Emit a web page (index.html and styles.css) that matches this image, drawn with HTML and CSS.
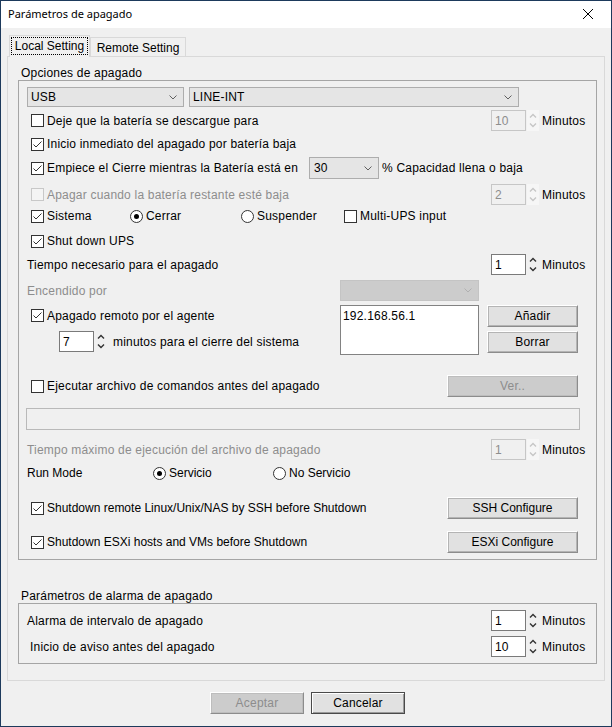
FILE: index.html
```html
<!DOCTYPE html>
<html lang="es">
<head>
<meta charset="utf-8">
<title>Parámetros de apagado</title>
<link rel="stylesheet" href="styles.css">
</head>
<body>
<div class="window">
  <div class="titlebar">
    <span class="title">Parámetros de apagado</span>
    <span class="close"><svg width="10" height="10" viewBox="0 0 10 10"><path d="M0 0L10 10M10 0L0 10" stroke="#000" stroke-width="1" fill="none"/></svg></span>
  </div>
  <div class="client">
    <div class="tabs">
      <div class="tab active"><span class="focus">Local Setting</span></div>
      <div class="tab">Remote Setting</div>
    </div>
    <div class="panel">
      <div class="glabel">Opciones de apagado</div>
      <div class="group">
        <div class="row h20">
          <div class="select usb"><span>USB</span><svg class="chev" width="8" height="5" viewBox="0 0 8 5"><path d="M0.5 0.5L4 4L7.5 0.5" stroke="#606060" fill="none"/></svg></div>
          <div class="select model"><span>LINE-INT</span><svg class="chev" width="8" height="5" viewBox="0 0 8 5"><path d="M0.5 0.5L4 4L7.5 0.5" stroke="#606060" fill="none"/></svg></div>
        </div>

        <div class="row h21 mt3">
          <label class="chk"><span class="cb"></span>Deje que la batería se descargue para</label>
          <div class="spin disabled">
            <span class="field">10</span>
            <span class="arrows"><svg width="12" height="21" viewBox="0 0 12 21"><path d="M3 7.5L6 4.5L9 7.5M3 13.5L6 16.5L9 13.5" stroke="#c6c6c6" stroke-width="1.4" fill="none"/></svg></span>
            <span class="unit">Minutos</span>
          </div>
        </div>

        <div class="row h20 mt3">
          <label class="chk"><span class="cb on"><svg width="11" height="11" viewBox="0 0 11 11"><path d="M1.5 5.5L4 8L9.5 2.5" stroke="#333" fill="none"/></svg></span>Inicio inmediato del apagado por batería baja</label>
        </div>

        <div class="row h22 mt3">
          <label class="chk w278"><span class="cb on"><svg width="11" height="11" viewBox="0 0 11 11"><path d="M1.5 5.5L4 8L9.5 2.5" stroke="#333" fill="none"/></svg></span>Empiece el Cierre mientras la Batería está en</label>
          <div class="select pct"><span>30</span><svg class="chev" width="8" height="5" viewBox="0 0 8 5"><path d="M0.5 0.5L4 4L7.5 0.5" stroke="#606060" fill="none"/></svg></div>
          <span class="after-pct">% Capacidad llena o baja</span>
        </div>

        <div class="row h21 mt5">
          <label class="chk dis"><span class="cb off"></span>Apagar cuando la batería restante esté baja</label>
          <div class="spin disabled">
            <span class="field">2</span>
            <span class="arrows"><svg width="12" height="21" viewBox="0 0 12 21"><path d="M3 7.5L6 4.5L9 7.5M3 13.5L6 16.5L9 13.5" stroke="#c6c6c6" stroke-width="1.4" fill="none"/></svg></span>
            <span class="unit">Minutos</span>
          </div>
        </div>

        <div class="row h20 mt1">
          <label class="chk w99"><span class="cb on"><svg width="11" height="11" viewBox="0 0 11 11"><path d="M1.5 5.5L4 8L9.5 2.5" stroke="#333" fill="none"/></svg></span>Sistema</label>
          <label class="opt w111"><span class="rb on"></span>Cerrar</label>
          <label class="opt w103"><span class="rb"></span>Suspender</label>
          <label class="opt"><span class="cb"></span>Multi-UPS input</label>
        </div>

        <div class="row h20 mt5">
          <label class="chk"><span class="cb on"><svg width="11" height="11" viewBox="0 0 11 11"><path d="M1.5 5.5L4 8L9.5 2.5" stroke="#333" fill="none"/></svg></span>Shut down UPS</label>
        </div>

        <div class="row h21 mt3">
          <span>Tiempo necesario para el apagado</span>
          <div class="spin">
            <span class="field">1</span>
            <span class="arrows"><svg width="12" height="21" viewBox="0 0 12 21"><path d="M3 7.5L6 4.5L9 7.5M3 13.5L6 16.5L9 13.5" stroke="#333" stroke-width="1.4" fill="none"/></svg></span>
            <span class="unit">Minutos</span>
          </div>
        </div>

        <div class="agent mt5">
          <span class="dis-text cell-label">Encendido por</span>
          <div class="select off"><span></span><svg class="chev" width="8" height="5" viewBox="0 0 8 5"><path d="M0.5 0.5L4 4L7.5 0.5" stroke="#b0b0b0" fill="none"/></svg></div>
          <span></span>

          <div class="agent-left">
            <div class="row h21">
              <label class="chk"><span class="cb on"><svg width="11" height="11" viewBox="0 0 11 11"><path d="M1.5 5.5L4 8L9.5 2.5" stroke="#333" fill="none"/></svg></span>Apagado remoto por el agente</label>
            </div>
            <div class="row h21 mt5">
              <div class="spin inline">
                <span class="field">7</span>
                <span class="arrows"><svg width="12" height="21" viewBox="0 0 12 21"><path d="M3 7.5L6 4.5L9 7.5M3 13.5L6 16.5L9 13.5" stroke="#333" stroke-width="1.4" fill="none"/></svg></span>
                <span class="unit">minutos para el cierre del sistema</span>
              </div>
            </div>
          </div>
          <div class="list">192.168.56.1</div>
          <div class="btncol">
            <div class="btn">Añadir</div>
            <div class="btn">Borrar</div>
          </div>
        </div>

        <div class="row h22 mt20">
          <label class="chk"><span class="cb"></span>Ejecutar archivo de comandos antes del apagado</label>
          <div class="btn wide disabled push">Ver..</div>
        </div>

        <div class="tfield mt11"></div>

        <div class="row h21 mt9">
          <span class="dis-text">Tiempo máximo de ejecución del archivo de apagado</span>
          <div class="spin disabled">
            <span class="field">1</span>
            <span class="arrows"><svg width="12" height="21" viewBox="0 0 12 21"><path d="M3 7.5L6 4.5L9 7.5M3 13.5L6 16.5L9 13.5" stroke="#c6c6c6" stroke-width="1.4" fill="none"/></svg></span>
            <span class="unit">Minutos</span>
          </div>
        </div>

        <div class="row h20 mt3 tight">
          <span class="w126">Run Mode</span>
          <label class="opt w120"><span class="rb on"></span>Servicio</label>
          <label class="opt"><span class="rb"></span>No Servicio</label>
        </div>

        <div class="row h22 mt14 tight">
          <label class="chk"><span class="cb on"><svg width="11" height="11" viewBox="0 0 11 11"><path d="M1.5 5.5L4 8L9.5 2.5" stroke="#333" fill="none"/></svg></span>Shutdown remote Linux/Unix/NAS by SSH before Shutdown</label>
          <div class="btn wide push">SSH Configure</div>
        </div>

        <div class="row h22 mt12 tight">
          <label class="chk"><span class="cb on"><svg width="11" height="11" viewBox="0 0 11 11"><path d="M1.5 5.5L4 8L9.5 2.5" stroke="#333" fill="none"/></svg></span>Shutdown ESXi hosts and VMs before Shutdown</label>
          <div class="btn wide push">ESXi Configure</div>
        </div>
      </div>

      <div class="glabel g2label">Parámetros de alarma de apagado</div>
      <div class="group">
        <div class="row h21">
          <span>Alarma de intervalo de apagado</span>
          <div class="spin">
            <span class="field">1</span>
            <span class="arrows"><svg width="12" height="21" viewBox="0 0 12 21"><path d="M3 7.5L6 4.5L9 7.5M3 13.5L6 16.5L9 13.5" stroke="#333" stroke-width="1.4" fill="none"/></svg></span>
            <span class="unit">Minutos</span>
          </div>
        </div>
        <div class="row h21 mt5">
          <span class="indent">Inicio de aviso antes del apagado</span>
          <div class="spin">
            <span class="field">10</span>
            <span class="arrows"><svg width="12" height="21" viewBox="0 0 12 21"><path d="M3 7.5L6 4.5L9 7.5M3 13.5L6 16.5L9 13.5" stroke="#333" stroke-width="1.4" fill="none"/></svg></span>
            <span class="unit">Minutos</span>
          </div>
        </div>
      </div>
    </div>

    <div class="actions">
      <div class="btn dlg disabled">Aceptar</div>
      <div class="btn dlg default">Cancelar</div>
    </div>
  </div>
</div>
</body>
</html>
```

FILE: styles.css
```css
* { box-sizing: border-box; }

body {
  margin: 0;
  background: #f0f0f0;
  font-family: "Liberation Sans", Arial, sans-serif;
  font-size: 12px;
  letter-spacing: 0.2px;
  color: #000;
}

.window {
  width: 612px;
  height: 727px;
  border: 1px solid #1d3a5c;
  background: #f0f0f0;
  overflow: hidden;
}

.titlebar {
  height: 27px;
  background: #fff;
  display: flex;
  align-items: center;
  justify-content: space-between;
}

.title {
  font-family: "Noto Sans", sans-serif;
  font-size: 11px;
  letter-spacing: 0;
  padding-left: 7px;
  padding-bottom: 2px;
}

.close {
  width: 46px;
  height: 27px;
  display: flex;
  align-items: center;
  justify-content: center;
  padding-bottom: 2px;
}

.client { padding: 7px 6px 0 6px; }

.tabs {
  display: flex;
  align-items: flex-end;
  height: 22px;
  padding-left: 2px;
  margin-bottom: -1px;
  position: relative;
  z-index: 1;
}

.tab {
  width: 96px;
  height: 19px;
  margin-bottom: 1px;
  border: 1px solid #d9d9d9;
  border-bottom: none;
  background: #f0f0f0;
  display: flex;
  align-items: center;
  justify-content: center;
  padding-top: 1px;
  letter-spacing: 0;
}

.tab.active {
  width: 81px;
  height: 22px;
  margin-bottom: 0;
  padding: 1px 1px 2px 1px;
}

.focus {
  width: 100%;
  height: 100%;
  border: 1px dotted #000;
  display: flex;
  align-items: center;
  justify-content: center;
}

.panel {
  height: 625px;
  border: 1px solid #d9d9d9;
  padding: 0 7px 0 10px;
}

.glabel {
  margin-top: 10px;
  height: 13px;
  line-height: 13px;
  padding-left: 3px;
}

.g2label { margin-top: 30px; }

.group {
  border: 1px solid #a5a5a5;
  padding: 6px 0 6px 8px;
}

.row { display: flex; align-items: center; }
.tight { letter-spacing: 0; }
.h20 { height: 20px; }
.h21 { height: 21px; }
.h22 { height: 22px; }
.mt1 { margin-top: 1px; }
.mt3 { margin-top: 3px; }
.mt5 { margin-top: 5px; }
.mt9 { margin-top: 9px; }
.mt11 { margin-top: 11px; }
.mt12 { margin-top: 12px; }
.mt14 { margin-top: 14px; }
.mt20 { margin-top: 20px; }

.w99 { width: 99px; }
.w103 { width: 103px; }
.w111 { width: 111px; }
.w120 { width: 120px; }
.w126 { width: 126px; }
.w278 { width: 278px; flex: none; }

.indent { padding-left: 3px; }

/* selects */
.select {
  height: 20px;
  background: #e5e5e5;
  border: 1px solid #adadad;
  display: flex;
  align-items: center;
  justify-content: space-between;
  padding: 0 6px 0 3px;
  flex: none;
}
.select.usb { width: 157px; }
.select.model { width: 330px; margin-left: 5px; }
.select.pct { width: 70px; height: 22px; padding-left: 4px; }
.select.off { width: 139px; height: 21px; background: #cccccc; border-color: #c4c4c4; }
.after-pct { margin-left: 3px; }

/* check boxes & radios */
.chk, .opt { display: flex; align-items: center; white-space: nowrap; }
.chk { margin-left: 4px; }

.cb {
  width: 13px;
  height: 13px;
  border: 1px solid #333;
  background: #fff;
  margin-right: 3px;
  display: flex;
  align-items: center;
  justify-content: center;
  flex: none;
}
.cb.off { border-color: #c8c8c8; background: #f4f4f4; }

.rb {
  width: 13px;
  height: 13px;
  border: 1px solid #333;
  border-radius: 50%;
  background: #fff;
  margin-right: 3px;
  display: flex;
  align-items: center;
  justify-content: center;
  flex: none;
}
.rb.on::after {
  content: "";
  width: 5px;
  height: 5px;
  border-radius: 50%;
  background: #000;
}

.dis, .dis-text { color: #8d8d8d; }

/* spinners */
.spin {
  display: flex;
  align-items: center;
  width: 105px;
  margin-left: auto;
  flex: none;
}
.spin .field {
  width: 35px;
  height: 21px;
  border: 1px solid #7a7a7a;
  background: #fff;
  padding-left: 3px;
  display: flex;
  align-items: center;
  flex: none;
}
.spin .arrows {
  width: 12px;
  height: 21px;
  margin-left: 1px;
  display: flex;
  flex: none;
}
.spin .unit { margin-left: 3px; white-space: nowrap; }

.spin.disabled .field { background: #f0f0f0; border-color: #c6c6c6; color: #8d8d8d; }
.spin.disabled .arrows { background: #f6f6f6; }
.spin.disabled .unit { color: #000; }

.spin.inline { width: auto; margin-left: 32px; }
.spin.inline .unit { margin-left: 6px; }

/* agent block */
.agent {
  display: grid;
  grid-template-columns: 313px 147px 91px;
  grid-template-rows: 21px 50px;
  row-gap: 4px;
}
.cell-label { align-self: center; }
.list {
  width: 139px;
  height: 50px;
  border: 1px solid #828282;
  background: #fff;
  padding: 3px 0 0 2px;
}
.btncol { display: flex; flex-direction: column; gap: 4px; }

/* buttons */
.btn {
  height: 22px;
  width: 91px;
  background: #e1e1e1;
  border: 1px solid;
  border-color: #ffffff #8c8c8c #8c8c8c #ffffff;
  box-shadow: inset 0 0 0 1px #b4b4b4;
  display: flex;
  align-items: center;
  justify-content: center;
  flex: none;
}
.btn.wide { width: 131px; }
.btn.push { margin-left: auto; margin-right: 18px; }
.btn.disabled { background: #cccccc; color: #8d8d8d; box-shadow: inset 0 0 0 1px #bdbdbd; }

.tfield {
  width: 554px;
  height: 22px;
  margin-left: -1px;
  border: 1px solid #b9b9b9;
  background: #f0f0f0;
}

.actions {
  display: flex;
  justify-content: center;
  gap: 7px;
  margin-top: 11px;
  padding-left: 3px;
}
.btn.dlg { width: 94px; }
.btn.default {
  border: 1px solid #4a4a4a;
  box-shadow: inset 1px 1px 0 #fff, inset -1px -1px 0 #9a9a9a;
}
```
